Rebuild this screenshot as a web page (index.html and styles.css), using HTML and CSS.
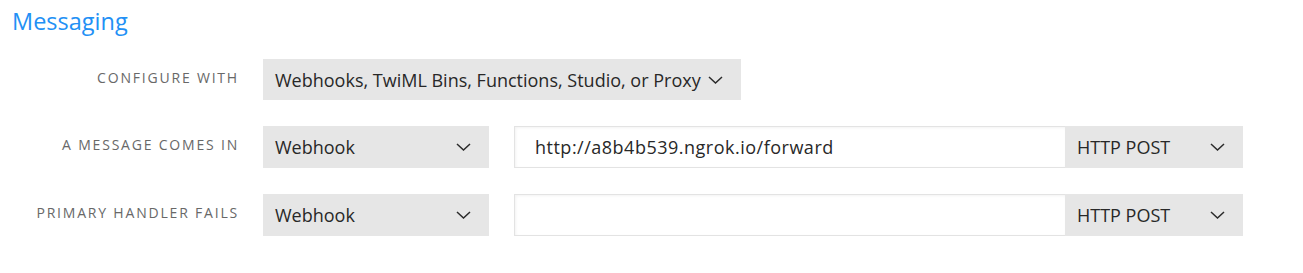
FILE: index.html
```html
<!DOCTYPE html>
<html lang="en">
<head>
    <meta charset="UTF-8">
    <title>Messaging</title>
    <link rel="stylesheet" href="styles.css">
</head>
<body>

<div class="section">
    <h2>Messaging</h2>

    <div class="row">
        <div class="label">Configure with</div>
        <div class="select select-wide">
            <span>Webhooks, TwiML Bins, Functions, Studio, or Proxy</span>
            <svg class="chevron" width="15" height="8" viewBox="0 0 15 8"><path d="M1 1l6.5 6 6.5-6" /></svg>
        </div>
    </div>

    <div class="row">
        <div class="label">A message comes in</div>
        <div class="select select-type">
            <span>Webhook</span>
            <svg class="chevron" width="15" height="8" viewBox="0 0 15 8"><path d="M1 1l6.5 6 6.5-6" /></svg>
        </div>
        <div class="url-group">
            <input type="text" class="url" value="http://a8b4b539.ngrok.io/forward">
            <div class="select select-method">
                <span>HTTP POST</span>
                <svg class="chevron" width="15" height="8" viewBox="0 0 15 8"><path d="M1 1l6.5 6 6.5-6" /></svg>
            </div>
        </div>
    </div>

    <div class="row">
        <div class="label">Primary handler fails</div>
        <div class="select select-type">
            <span>Webhook</span>
            <svg class="chevron" width="15" height="8" viewBox="0 0 15 8"><path d="M1 1l6.5 6 6.5-6" /></svg>
        </div>
        <div class="url-group">
            <input type="text" class="url" value="">
            <div class="select select-method">
                <span>HTTP POST</span>
                <svg class="chevron" width="15" height="8" viewBox="0 0 15 8"><path d="M1 1l6.5 6 6.5-6" /></svg>
            </div>
        </div>
    </div>
</div>

</body>
</html>
```

FILE: styles.css
```css
* {
    margin: 0;
    padding: 0;
    box-sizing: border-box;
}

body {
    font-family: 'Open Sans', 'Lato', sans-serif;
    background: #fff;
    color: #282828;
}

.section {
    padding: 6px 12px 0 12px;
}

.section h2 {
    font-size: 23.5px;
    font-weight: 400;
    color: #2290f5;
    line-height: 30px;
    margin-bottom: 23px;
}

.row {
    display: flex;
    align-items: flex-start;
    margin-bottom: 26px;
}

.row .label {
    width: 227px;
    margin-right: 24px;
    padding-top: 9px;
    text-align: right;
    text-transform: uppercase;
    letter-spacing: 1.8px;
    font-size: 14px;
    color: #686868;
}

.select {
    display: flex;
    align-items: center;
    justify-content: space-between;
    height: 42px;
    padding: 0 18px 0 12px;
    background: #e6e6e6;
    font-size: 18px;
    color: #282828;
}

.select-wide {
    width: 478px;
    height: 41px;
    justify-content: flex-start;
    gap: 7px;
}

.select-type {
    width: 226px;
    margin-right: 25px;
}

.select-method {
    width: 178px;
}

.chevron path {
    fill: none;
    stroke: #2b2b2b;
    stroke-width: 1.5;
}

.url-group {
    display: flex;
}

.url {
    width: 551px;
    height: 42px;
    padding: 0 20px;
    border: 1px solid #e3e3e3;
    border-right: none;
    box-shadow: inset 1px 1px 3px rgba(0, 0, 0, 0.05);
    font-family: inherit;
    font-size: 18px;
    letter-spacing: 0.5px;
    color: #282828;
    outline: none;
}
```
